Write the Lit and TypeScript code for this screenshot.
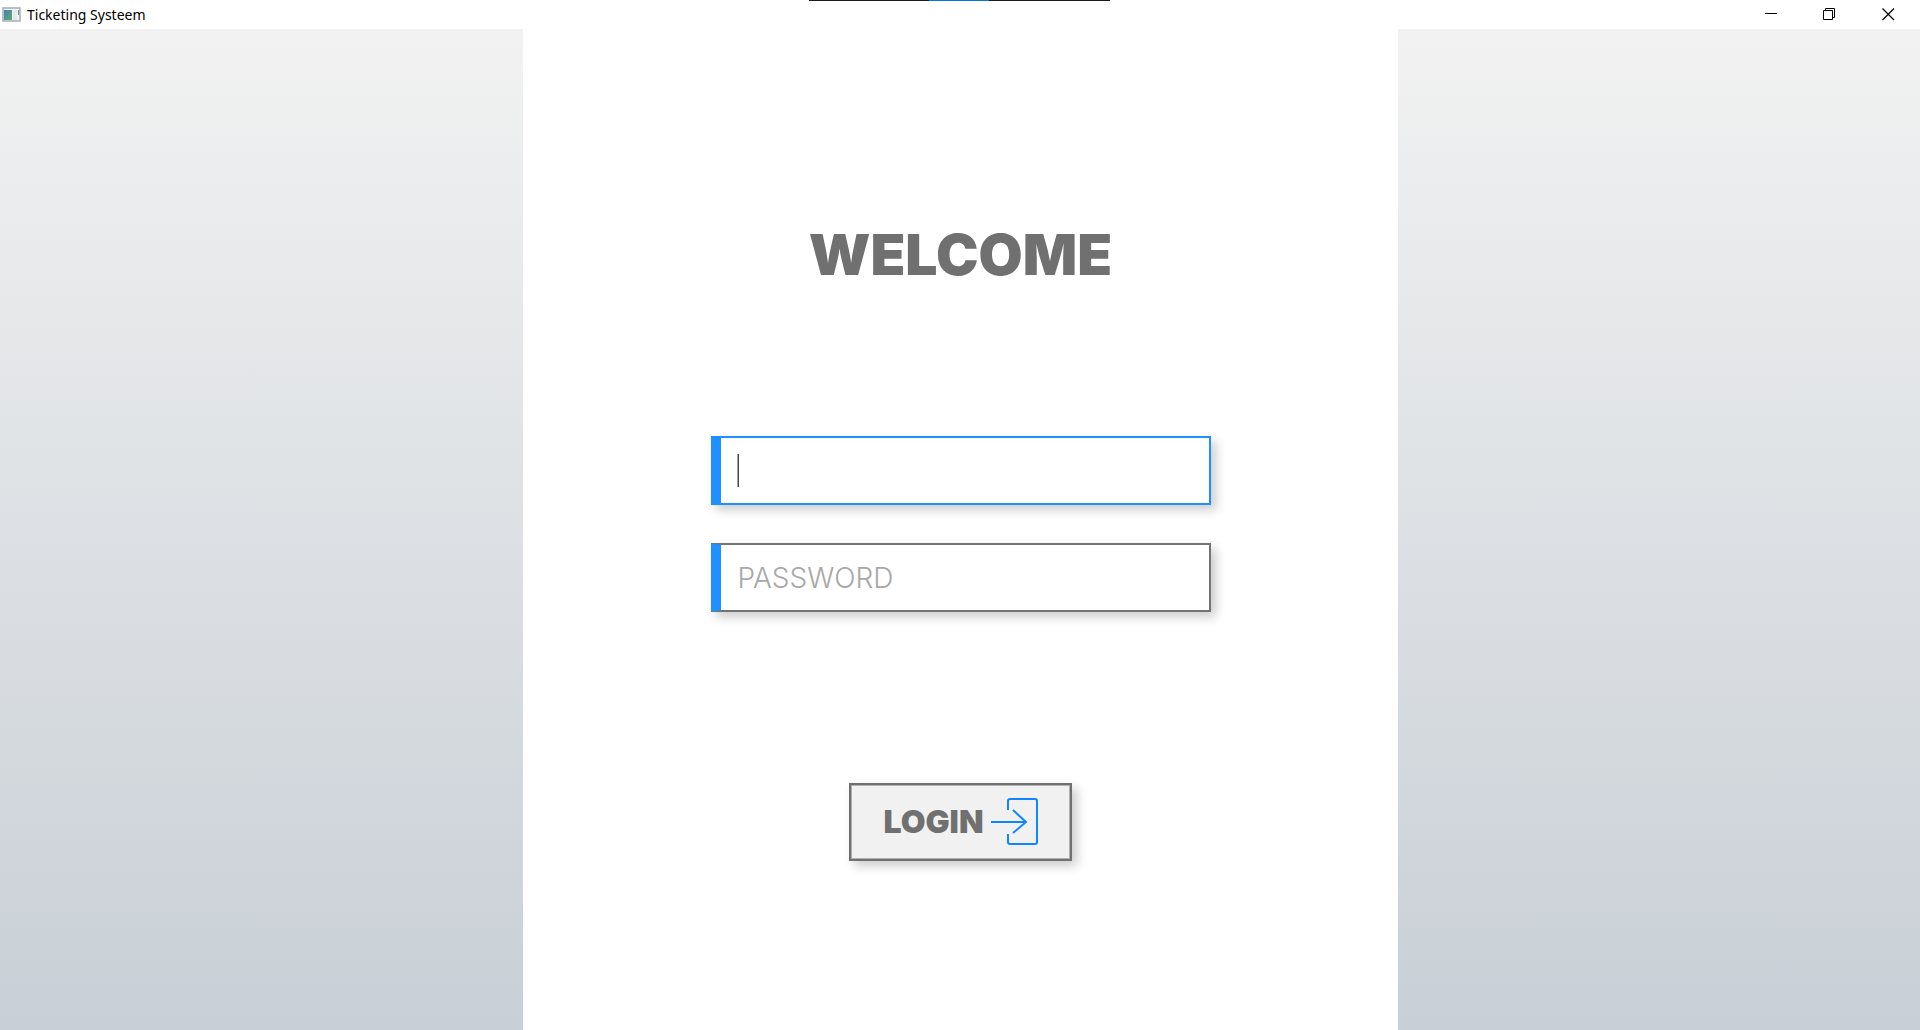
import { LitElement, html, css } from "lit";
import { customElement, state } from "lit/decorators.js";

@customElement("window-bar")
class WindowBar extends LitElement {
  static styles = css`
    :host {
      display: block;
      background: #ffffff;
    }
    .bar {
      display: flex;
      align-items: center;
      height: 29px;
      padding: 0 2px;
    }
    .title {
      flex: 1;
      margin-left: 5px;
      font: 400 14px/20px "Noto Sans", "Open Sans", sans-serif;
      color: #000000;
    }
    .app-icon {
      display: block;
      width: 20px;
      height: 16px;
    }
    .control {
      display: grid;
      place-items: center;
      width: 59px;
      height: 29px;
      padding: 0;
      border: 0;
      background: transparent;
    }
    .control:hover {
      background: #e5e5e5;
    }
    .glyph {
      display: block;
      width: 13px;
      height: 13px;
      fill: none;
      stroke: #000000;
      stroke-width: 1;
    }
    .cross {
      stroke-width: 1.15;
    }
  `;

  render() {
    return html`
      <header class="bar">
        <svg class="app-icon" viewBox="0 0 20 16" aria-hidden="true">
          <defs>
            <linearGradient id="pane" x1="0" y1="0" x2="1" y2="1">
              <stop offset="0" stop-color="#4a7fa8" />
              <stop offset="1" stop-color="#56b07c" />
            </linearGradient>
          </defs>
          <rect x="1" y="1" width="17" height="13" fill="#f4f5f7" stroke="#a9b1ba" stroke-width="1.6" />
          <rect x="2" y="3" width="8" height="10" fill="url(#pane)" />
          <rect x="11" y="3" width="4" height="10" fill="#e6e8ea" />
          <rect x="16" y="3" width="1" height="5" fill="#56a08c" />
        </svg>
        <span class="title">Ticketing Systeem</span>
        <button class="control" type="button" aria-label="Minimize">
          <svg class="glyph" viewBox="0 0 13 13"><path d="M1 5.5H13" /></svg>
        </button>
        <button class="control" type="button" aria-label="Restore">
          <svg class="glyph" viewBox="0 0 13 13">
            <path d="M.5 2.5H9.5V11.5H.5ZM2.5 2.5V.5H11.5V9.5H9.5" />
          </svg>
        </button>
        <button class="control" type="button" aria-label="Close">
          <svg class="glyph cross" viewBox="0 0 13 13"><path d="M.5 .5L12 12M12 .5L.5 12" /></svg>
        </button>
      </header>
    `;
  }
}

@customElement("login-form")
class LoginForm extends LitElement {
  @state() private active = "username";

  static styles = css`
    :host {
      display: block;
      font-family: Inter, "Open Sans", sans-serif;
      color: #707070;
    }
    .form {
      display: flex;
      flex-direction: column;
      align-items: center;
      padding: 196px 24px 24px;
    }
    .heading {
      margin: 0;
      font-size: 57px;
      line-height: 60px;
      font-weight: 900;
    }
    .fields {
      display: flex;
      flex-direction: column;
      gap: 38px;
      width: 100%;
      max-width: 500px;
      margin: 151px 0 171px;
    }
    .field {
      position: relative;
      display: block;
    }
    .input {
      display: block;
      box-sizing: border-box;
      width: 100%;
      height: 69px;
      padding: 0 17px;
      border: 2px solid #747474;
      border-left: 10px solid #1e90ff;
      border-radius: 0;
      outline: none;
      background: #ffffff;
      box-shadow: 5px 5px 10px rgba(0, 0, 0, 0.2);
      font: 300 28px/32px Inter, "Open Sans", sans-serif;
      color: #707070;
      caret-color: transparent;
    }
    .input::placeholder {
      color: #a8a8a8;
      opacity: 1;
    }
    .active .input {
      border-color: #1e90ff;
    }
    .caret {
      position: absolute;
      left: 26px;
      top: 18px;
      width: 2px;
      height: 33px;
      background: linear-gradient(to right, #a0a0a0 50%, #484848 50%);
    }
    .login {
      display: flex;
      align-items: center;
      justify-content: center;
      gap: 6px;
      height: 78px;
      padding: 0 32px;
      border: 2px solid #707070;
      background: #f1f1f1;
      box-shadow: 5px 5px 10px rgba(0, 0, 0, 0.2), inset 0 0 0 1px #b0b0b0;
      font: 900 32px/36px Inter, "Open Sans", sans-serif;
      color: #707070;
    }
    .enter {
      display: block;
      width: 48px;
      height: 49px;
      fill: none;
      stroke: #0d86ff;
      stroke-width: 2;
    }
  `;

  private field(name: string, type: string, placeholder: string) {
    const active = this.active === name;
    return html`
      <div class="field ${active ? "active" : ""}">
        <input
          class="input"
          type=${type}
          name=${name}
          aria-label=${name}
          placeholder=${placeholder}
          @focus=${() => (this.active = name)}
        />
        ${active ? html`<span class="caret"></span>` : ""}
      </div>
    `;
  }

  render() {
    return html`
      <form class="form" @submit=${(e: Event) => e.preventDefault()}>
        <h1 class="heading">WELCOME</h1>
        <div class="fields">
          ${this.field("username", "text", "")}
          ${this.field("password", "password", "PASSWORD")}
        </div>
        <button class="login" type="submit">
          LOGIN
          <svg class="enter" viewBox="0 0 48 49" aria-hidden="true">
            <path d="M1 24H35M23 12L36 24L23 35" />
            <path d="M18 12V3Q18 1 20 1H45Q47 1 47 3V44Q47 46 45 46H20Q18 46 18 44V36" />
          </svg>
        </button>
      </form>
    `;
  }
}

@customElement("app-root")
class AppRoot extends LitElement {
  static styles = css`
    :host {
      display: block;
    }
    .window {
      position: relative;
      display: flex;
      flex-direction: column;
      min-height: 100vh;
    }
    .desk {
      flex: 1;
      display: grid;
      grid-template-columns: 523fr 875fr 522fr;
      background: linear-gradient(#f2f2f2, #c8cfd6);
    }
    .panel {
      grid-column: 2;
      background: #ffffff;
    }
    .handle {
      position: absolute;
      top: 0;
      left: 50%;
      width: 301px;
      height: 1px;
      transform: translateX(-151px);
      background: linear-gradient(to right, #1c1c1c 120px, #0078d7 120px 180px, #1c1c1c 180px);
    }
  `;

  render() {
    return html`
      <div class="window">
        <window-bar></window-bar>
        <main class="desk">
          <login-form class="panel"></login-form>
        </main>
        <div class="handle"></div>
      </div>
    `;
  }
}
